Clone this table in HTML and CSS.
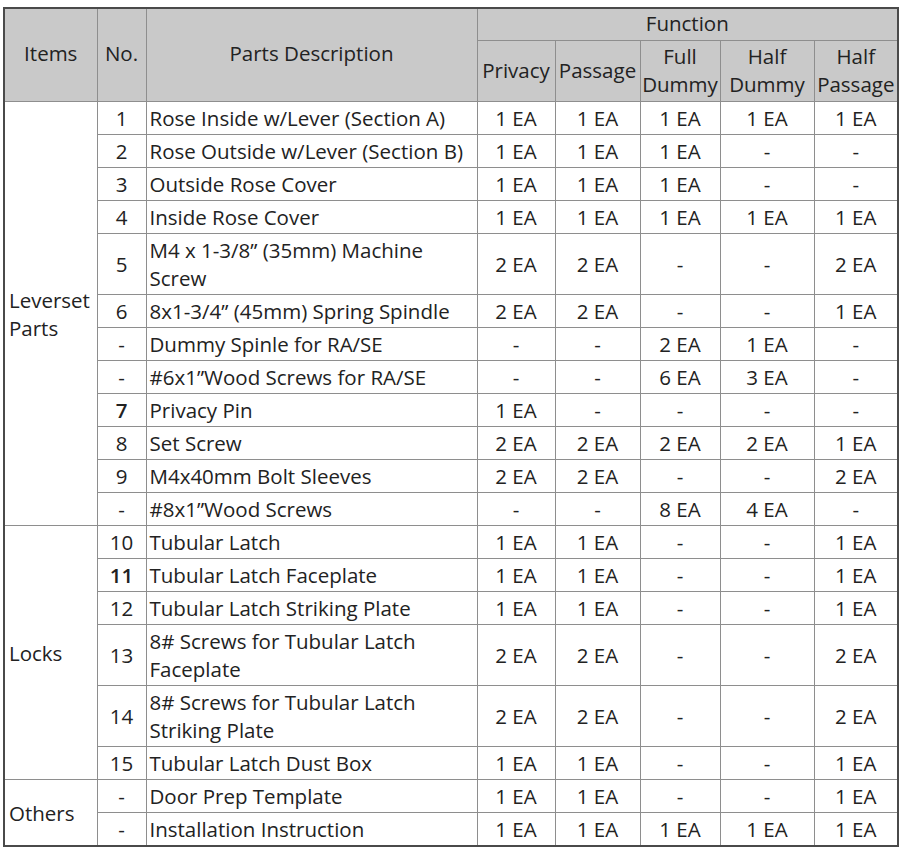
FILE: index.html
```html
<!DOCTYPE html>
<html lang="en">
<head>
<meta charset="utf-8">
<title>Parts List</title>
<link rel="stylesheet" href="styles.css">
</head>
<body>
<table class="parts">
  <colgroup>
    <col class="c-items">
    <col class="c-no">
    <col class="c-desc">
    <col class="c-privacy">
    <col class="c-passage">
    <col class="c-full">
    <col class="c-half">
    <col class="c-halfp">
  </colgroup>
  <thead>
    <tr class="h1">
      <th class="span" rowspan="2">Items</th>
      <th class="span" rowspan="2">No.</th>
      <th class="span" rowspan="2">Parts Description</th>
      <th colspan="5">Function</th>
    </tr>
    <tr class="h2">
      <th>Privacy</th>
      <th>Passage</th>
      <th>Full<br>Dummy</th>
      <th>Half<br>Dummy</th>
      <th>Half<br>Passage</th>
    </tr>
  </thead>
  <tbody>
    <tr>
      <td class="group" rowspan="12">Leverset<br>Parts</td>
      <td class="no">1</td><td class="desc">Rose Inside w/Lever (Section A)</td>
      <td>1 EA</td><td>1 EA</td><td>1 EA</td><td>1 EA</td><td>1 EA</td>
    </tr>
    <tr>
      <td class="no">2</td><td class="desc">Rose Outside w/Lever (Section B)</td>
      <td>1 EA</td><td>1 EA</td><td>1 EA</td><td>-</td><td>-</td>
    </tr>
    <tr>
      <td class="no">3</td><td class="desc">Outside Rose Cover</td>
      <td>1 EA</td><td>1 EA</td><td>1 EA</td><td>-</td><td>-</td>
    </tr>
    <tr>
      <td class="no">4</td><td class="desc">Inside Rose Cover</td>
      <td>1 EA</td><td>1 EA</td><td>1 EA</td><td>1 EA</td><td>1 EA</td>
    </tr>
    <tr>
      <td class="no">5</td><td class="desc">M4 x 1-3/8” (35mm) Machine<br>Screw</td>
      <td>2 EA</td><td>2 EA</td><td>-</td><td>-</td><td>2 EA</td>
    </tr>
    <tr>
      <td class="no">6</td><td class="desc">8x1-3/4” (45mm) Spring Spindle</td>
      <td>2 EA</td><td>2 EA</td><td>-</td><td>-</td><td>1 EA</td>
    </tr>
    <tr>
      <td class="no">-</td><td class="desc">Dummy Spinle for RA/SE</td>
      <td>-</td><td>-</td><td>2 EA</td><td>1 EA</td><td>-</td>
    </tr>
    <tr>
      <td class="no">-</td><td class="desc">#6x1”Wood Screws for RA/SE</td>
      <td>-</td><td>-</td><td>6 EA</td><td>3 EA</td><td>-</td>
    </tr>
    <tr>
      <td class="no strong">7</td><td class="desc">Privacy Pin</td>
      <td>1 EA</td><td>-</td><td>-</td><td>-</td><td>-</td>
    </tr>
    <tr>
      <td class="no">8</td><td class="desc">Set Screw</td>
      <td>2 EA</td><td>2 EA</td><td>2 EA</td><td>2 EA</td><td>1 EA</td>
    </tr>
    <tr>
      <td class="no">9</td><td class="desc">M4x40mm Bolt Sleeves</td>
      <td>2 EA</td><td>2 EA</td><td>-</td><td>-</td><td>2 EA</td>
    </tr>
    <tr>
      <td class="no">-</td><td class="desc">#8x1”Wood Screws</td>
      <td>-</td><td>-</td><td>8 EA</td><td>4 EA</td><td>-</td>
    </tr>
    <tr>
      <td class="group" rowspan="6">Locks</td>
      <td class="no">10</td><td class="desc">Tubular Latch</td>
      <td>1 EA</td><td>1 EA</td><td>-</td><td>-</td><td>1 EA</td>
    </tr>
    <tr>
      <td class="no strong">11</td><td class="desc">Tubular Latch Faceplate</td>
      <td>1 EA</td><td>1 EA</td><td>-</td><td>-</td><td>1 EA</td>
    </tr>
    <tr>
      <td class="no">12</td><td class="desc">Tubular Latch Striking Plate</td>
      <td>1 EA</td><td>1 EA</td><td>-</td><td>-</td><td>1 EA</td>
    </tr>
    <tr>
      <td class="no">13</td><td class="desc">8# Screws for Tubular Latch<br>Faceplate</td>
      <td>2 EA</td><td>2 EA</td><td>-</td><td>-</td><td>2 EA</td>
    </tr>
    <tr>
      <td class="no">14</td><td class="desc">8# Screws for Tubular Latch<br>Striking Plate</td>
      <td>2 EA</td><td>2 EA</td><td>-</td><td>-</td><td>2 EA</td>
    </tr>
    <tr>
      <td class="no">15</td><td class="desc">Tubular Latch Dust Box</td>
      <td>1 EA</td><td>1 EA</td><td>-</td><td>-</td><td>1 EA</td>
    </tr>
    <tr>
      <td class="group" rowspan="2">Others</td>
      <td class="no">-</td><td class="desc">Door Prep Template</td>
      <td>1 EA</td><td>1 EA</td><td>-</td><td>-</td><td>1 EA</td>
    </tr>
    <tr>
      <td class="no">-</td><td class="desc">Installation Instruction</td>
      <td>1 EA</td><td>1 EA</td><td>1 EA</td><td>1 EA</td><td>1 EA</td>
    </tr>
  </tbody>
</table>
</body>
</html>
```

FILE: styles.css
```css
html, body {
  margin: 0;
  padding: 0;
  background: #ffffff;
}

body {
  padding: 7px 0 0 3px;
  font-family: "Open Sans", "Lato", sans-serif;
  font-size: 20.5px;
  color: #222222;
}

.parts {
  border-collapse: collapse;
  table-layout: fixed;
  width: 894px;
  border: 2px solid #4a4a4a;
}

.c-items { width: 93px; }
.c-no { width: 49px; }
.c-desc { width: 331px; }
.c-privacy { width: 78px; }
.c-passage { width: 85px; }
.c-full { width: 80px; }
.c-half { width: 94px; }
.c-halfp { width: 84px; }

.parts th,
.parts td {
  border: 1px solid #8e8e8e;
  line-height: 28px;
  padding: 2px 0;
  text-align: center;
  vertical-align: middle;
  font-weight: 400;
  white-space: nowrap;
}

.parts thead th {
  background: #c9c9c9;
}

.parts .h1 th {
  padding: 0 0 3px;
}

.parts .h1 th.span {
  padding: 2px 0 6px;
}

.parts .h2 th {
  padding: 1px 0 3px;
}

.parts td.group {
  text-align: left;
  padding-left: 4px;
}

.parts td.desc {
  text-align: left;
  padding-left: 3px;
}

.parts td.strong {
  font-weight: 600;
}
```
